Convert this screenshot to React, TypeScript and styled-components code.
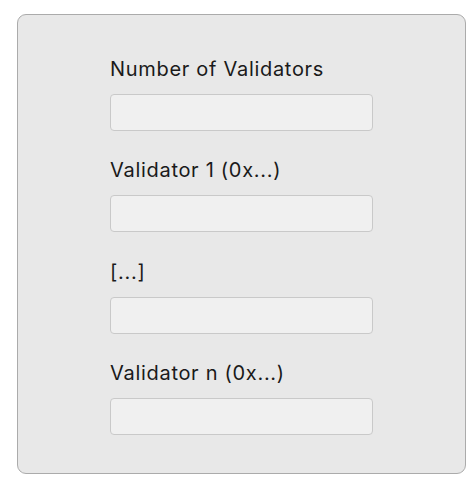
import styled, { createGlobalStyle } from "styled-components";

const GlobalStyle = createGlobalStyle`
  body {
    margin: 0;
    background: #ffffff;
    font-family: Inter, "Liberation Sans", sans-serif;
  }
`;

const Page = styled.div`
  padding: 14px 0 0 17px;
`;

const Panel = styled.div`
  width: 449px;
  height: 460px;
  box-sizing: border-box;
  background: #e8e8e8;
  border: 1px solid #ababab;
  border-radius: 9px;
  padding: 42px 0 0 92px;
  display: flex;
  flex-direction: column;
  gap: 27.3px;
`;

const Field = styled.div`
  display: flex;
  flex-direction: column;
  gap: 13px;
`;

const Label = styled.label`
  font-size: 20px;
  line-height: 24px;
  letter-spacing: 0.7px;
  color: #1a1a1a;
`;

const Input = styled.input`
  width: 263px;
  height: 37px;
  box-sizing: border-box;
  margin: 0;
  background: #f0f0f0;
  border: 1px solid #c9c9c9;
  border-radius: 4px;
  outline: none;
`;

const fields = [
  "Number of Validators",
  "Validator 1 (0x...)",
  "[...]",
  "Validator n (0x...)",
];

export default function App() {
  return (
    <>
      <GlobalStyle />
      <Page>
        <Panel>
          {fields.map((name) => (
            <Field key={name}>
              <Label>{name}</Label>
              <Input type="text" />
            </Field>
          ))}
        </Panel>
      </Page>
    </>
  );
}
